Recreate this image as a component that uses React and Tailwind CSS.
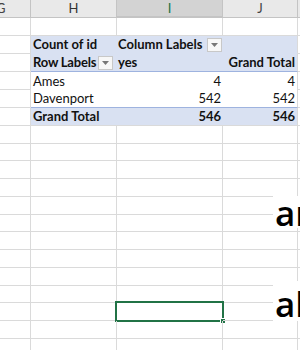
import React from "react";

const W = ["w-[31px]", "w-[86px]", "w-[106px]", "w-[75px]", "w-[60px]"];
const HEIGHTS = [18, 18, 18, 18, 18, 18, 18, 17, 18, 18, 18, 17, 18, 18, 18, 17, 18, 18, 18];
const GRID = "border-r border-b border-[#dadada]";
const BLUE = "bg-[#d9e1f2]";

function Dropdown() {
  return (
    <div className="w-[15px] h-[14px] border border-[#c8c8c8] bg-[#f7f7f7] flex items-center justify-center shrink-0">
      <svg width="7" height="4" viewBox="0 0 7 4">
        <path d="M0 0 L7 0 L3.5 4 Z" fill="#777" />
      </svg>
    </div>
  );
}

function Cell({ col, h, cls = "", children }) {
  const hc = h === 17 ? "h-[17px]" : "h-[18px]";
  return (
    <div className={`relative shrink-0 box-border flex items-center whitespace-nowrap ${W[col]} ${hc} ${cls}`}>
      {children}
    </div>
  );
}

function pivotRow(r, h) {
  if (r === 2) {
    return [
      <Cell key="h" col={1} h={h} cls={`${BLUE} border-b border-b-[#d9e1f2] font-bold pl-[2px]`}>Count of id</Cell>,
      <Cell key="i" col={2} h={h} cls={`${BLUE} border-b border-b-[#d9e1f2] font-bold pl-[1px] gap-[4px]`}>
        <span>Column Labels</span>
        <Dropdown />
      </Cell>,
      <Cell key="j" col={3} h={h} cls={`${BLUE} border-b border-b-[#d9e1f2] border-r border-r-[#dadada]`} />,
    ];
  }
  if (r === 3) {
    return [
      <Cell key="h" col={1} h={h} cls={`${BLUE} border-b border-b-[#9eb3df] font-bold pl-[2px] gap-[2px]`}>
        <span className="tracking-[-0.2px]">Row Labels</span>
        <Dropdown />
      </Cell>,
      <Cell key="i" col={2} h={h} cls={`${BLUE} border-b border-b-[#9eb3df] font-bold pl-[1px]`}>yes</Cell>,
      <Cell key="j" col={3} h={h} cls={`${BLUE} border-b border-b-[#9eb3df] border-r border-r-[#dadada] font-bold justify-end pr-[2px]`}>Grand Total</Cell>,
    ];
  }
  if (r === 4 || r === 5) {
    const name = r === 4 ? "Ames" : "Davenport";
    const v = r === 4 ? "4" : "542";
    const bb = r === 5 ? "border-b border-b-[#9eb3df]" : "";
    return [
      <Cell key="h" col={1} h={h} cls={`bg-white ${bb} pl-[2px]`}>{name}</Cell>,
      <Cell key="i" col={2} h={h} cls={`bg-white ${bb} justify-end pr-[2px]`}>{v}</Cell>,
      <Cell key="j" col={3} h={h} cls={`bg-white ${bb} border-r border-r-[#dadada] justify-end pr-[2px]`}>{v}</Cell>,
    ];
  }
  if (r === 6) {
    return [
      <Cell key="h" col={1} h={h} cls={`${BLUE} border-b border-b-[#dadada] font-bold pl-[2px]`}>Grand Total</Cell>,
      <Cell key="i" col={2} h={h} cls={`${BLUE} border-b border-b-[#dadada] font-bold justify-end pr-[2px]`}>546</Cell>,
      <Cell key="j" col={3} h={h} cls={`${BLUE} border-b border-b-[#dadada] border-r border-r-[#dadada] font-bold justify-end pr-[2px]`}>546</Cell>,
    ];
  }
  return null;
}

const HEAD = "shrink-0 box-border h-[18px] border-r border-b border-r-[#c4c4c4] border-b-[#c4c4c4] flex items-center justify-center text-[13px]";

export default function App() {
  return (
    <div className="relative w-[300px] h-[350px] overflow-hidden bg-white text-[13px] leading-none text-[#111] font-['Lato','Open_Sans',sans-serif]">
      {/* column headers */}
      <div className="flex h-[18px]">
        <div className={`${HEAD} ${W[0]} bg-[#e9e9e9] overflow-hidden justify-start`}>
          <span className="ml-[-4px] text-[#444]">G</span>
        </div>
        <div className={`${HEAD} ${W[1]} bg-[#e9e9e9] text-[#333]`}>H</div>
        <div className={`${HEAD} ${W[2]} bg-[#d3d3d3] border-b-2 border-b-[#217346] text-[#217346]`}>I</div>
        <div className={`${HEAD} ${W[3]} bg-[#e9e9e9] text-[#444]`}>J</div>
        <div className={`${HEAD} ${W[4]} bg-[#e9e9e9] border-r-0`} />
      </div>

      {HEIGHTS.map((h, idx) => {
        const r = idx + 1;
        const pivot = pivotRow(r, h);
        return (
          <div key={r} className="flex">
            <Cell col={0} h={h} cls={GRID} />
            {pivot ? (
              pivot
            ) : (
              <>
                <Cell col={1} h={h} cls={GRID} />
                <Cell col={2} h={h} cls={GRID}>
                  {r === 17 && (
                    <>
                      <div className="absolute left-[-2px] top-[-2px] right-[-2px] bottom-[-2px] border-2 border-[#217346]" />
                      <div className="absolute right-[-4px] bottom-[-4px] w-[6px] h-[6px] bg-[#217346] border border-white" />
                    </>
                  )}
                </Cell>
                <Cell col={3} h={h} cls={GRID} />
              </>
            )}
            <Cell col={4} h={h} cls={GRID} />
          </div>
        );
      })}

      {/* floating text boxes over the sheet */}
      <div className="absolute left-[273px] top-[196px] h-[32px] bg-white flex items-center pl-[2px] text-[35px] font-semibold text-black whitespace-nowrap font-['Open_Sans',sans-serif]">
        an
      </div>
      <div className="absolute left-[273px] top-[281px] h-[40px] bg-white flex items-end pl-[2px] text-[35px] font-semibold text-black whitespace-nowrap font-['Open_Sans',sans-serif]">
        ab
      </div>
    </div>
  );
}
